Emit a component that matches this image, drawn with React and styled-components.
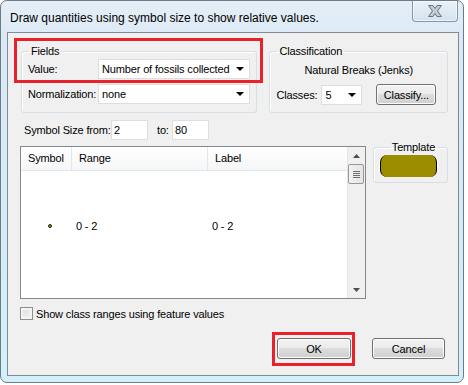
import styled, { createGlobalStyle } from "styled-components";

const Global = createGlobalStyle`
    html, body {
        margin: 0;
        padding: 0;
        background: #ffffff;
        font-family: "Segoe UI", "Liberation Sans", Arial, sans-serif;
        font-size: 11px;
        color: #000;
    }
`;

export default function App(){
    return(
        <>
        <Global />
        <Window>
            <TitleBar>
                <Title>Draw quantities using symbol size to show relative values.</Title>
                <CloseBtn>
                    <svg width="20" height="14" viewBox="0 0 20 14">
                        <path d="M3.5 1.5 L8 1.5 L10 4.5 L12 1.5 L16.5 1.5 L12.5 7 L16.5 12.5 L12 12.5 L10 9.5 L8 12.5 L3.5 12.5 L7.5 7 Z"
                            fill="#c3cbd3" stroke="#6a747e" strokeWidth="1" strokeLinejoin="round" />
                    </svg>
                </CloseBtn>
            </TitleBar>
            <Body>
                <TopRow>
                    <Highlight $left={-7} $top={-6} $w={249} $h={45} />
                    <Group $w={237}>
                        <Legend>Fields</Legend>
                        <FieldRow>
                            <FieldLabel>Value:</FieldLabel>
                            <Combo $w={152}>Number of fossils collected<Arrow /></Combo>
                        </FieldRow>
                        <FieldRow>
                            <FieldLabel>Normalization:</FieldLabel>
                            <Combo $w={152}>none<Arrow /></Combo>
                        </FieldRow>
                    </Group>
                    <Group $w={179}>
                        <Legend>Classification</Legend>
                        <Method>Natural Breaks (Jenks)</Method>
                        <ClassRow>
                            <ClassLabel>Classes:</ClassLabel>
                            <Combo $w={41}>5<Arrow /></Combo>
                            <Button $w={60} $h={21}>Classify...</Button>
                        </ClassRow>
                    </Group>
                </TopRow>

                <SizeRow>
                    <SizeLabel>Symbol Size from:</SizeLabel>
                    <TextBox>2</TextBox>
                    <ToLabel>to:</ToLabel>
                    <TextBox>80</TextBox>
                </SizeRow>

                <MiddleRow>
                    <List>
                        <ListMain>
                            <Header>
                                <HeadCell $w={51}>Symbol</HeadCell>
                                <HeadCell $w={136}>Range</HeadCell>
                                <HeadCell $w={139} $last>Label</HeadCell>
                            </Header>
                            <Row>
                                <Cell $w={51} $center><Dot /></Cell>
                                <Cell $w={136}>0 - 2</Cell>
                                <Cell $w={139}>0 - 2</Cell>
                            </Row>
                        </ListMain>
                        <ScrollBar>
                            <ScrollArrow>
                                <svg width="7" height="4" viewBox="0 0 7 4"><path d="M0 4 L3.5 0 L7 4 Z" fill="#4d4d4d" /></svg>
                            </ScrollArrow>
                            <Thumb>
                                <Grip /><Grip /><Grip /><Grip />
                            </Thumb>
                            <Track />
                            <ScrollArrow>
                                <svg width="7" height="4" viewBox="0 0 7 4"><path d="M0 0 L3.5 4 L7 0 Z" fill="#4d4d4d" /></svg>
                            </ScrollArrow>
                        </ScrollBar>
                    </List>
                    <TemplateGroup>
                        <TemplateLegend>Template</TemplateLegend>
                        <Swatch />
                    </TemplateGroup>
                </MiddleRow>

                <CheckRow>
                    <CheckBox />
                    <span>Show class ranges using feature values</span>
                </CheckRow>

                <ButtonRow>
                    <Highlight $left={-5} $top={-6} $w={83} $h={34} />
                    <Button $w={74} $h={21}>OK</Button>
                    <Button $w={73} $h={21}>Cancel</Button>
                </ButtonRow>
            </Body>
        </Window>
        </>
    )
}

const Window = styled.div`
    width: 464px;
    height: 383px;
    box-sizing: border-box;
    border: 1px solid #6d7b89;
    border-radius: 7px;
    background: linear-gradient(#e6eef6 0%, #dbe9f5 10%, #d3ecf7 60%, #d3f1fb 100%);
    padding: 0 4px 6px 6px;
    display: flex;
    flex-direction: column;
    white-space: nowrap;
`;

const TitleBar = styled.div`
    height: 31px;
    display: flex;
    align-items: flex-start;
    justify-content: space-between;
`;

const Title = styled.div`
    padding: 10px 0 0 3px;
    font-size: 12px;
    color: #000;
`;

const CloseBtn = styled.div`
    width: 46px;
    height: 21px;
    margin-right: 1px;
    box-sizing: border-box;
    border: 1px solid #8796a6;
    border-top: none;
    border-radius: 0 0 4px 4px;
    background: linear-gradient(#e9f1f8, #d5e3ef);
    box-shadow: inset 0 0 0 1px rgba(255,255,255,0.6);
    display: flex;
    align-items: center;
    justify-content: center;
`;

const Body = styled.div`
    flex: 1;
    box-sizing: border-box;
    border: 1px solid #7f8a95;
    background: #f0f0f0;
    padding: 11px 10px 0 13px;
    display: flex;
    flex-direction: column;
    font-size: 11px;
    letter-spacing: -0.15px;
`;

const TopRow = styled.div`
    position: relative;
    display: flex;
    gap: 12px;
`;

const Highlight = styled.div`
    position: absolute;
    left: ${p => p.$left}px;
    top: ${p => p.$top}px;
    width: ${p => p.$w}px;
    height: ${p => p.$h}px;
    box-sizing: border-box;
    border: 3px solid #e8212b;
    pointer-events: none;
`;

const Group = styled.fieldset`
    width: ${p => p.$w}px;
    height: 69px;
    box-sizing: border-box;
    margin: 0;
    padding: 1px 6px 0 6px;
    border: 1px solid #d5dfe5;
    border-radius: 3px;
    box-shadow: inset 1px 1px 0 #fff;
    display: flex;
    flex-direction: column;
    gap: 5px;
`;

const Legend = styled.legend`
    padding: 0 2px;
    margin-left: 1px;
    line-height: 14px;
    font-size: 11px;
`;

const FieldRow = styled.div`
    display: flex;
    align-items: center;
`;

const FieldLabel = styled.span`
    width: 70px;
    flex-shrink: 0;
`;

const Combo = styled.div`
    position: relative;
    width: ${p => p.$w}px;
    height: 20px;
    flex-shrink: 0;
    box-sizing: border-box;
    background: #fff;
    border: 1px solid #dedede;
    padding: 0 0 0 3px;
    line-height: 18px;
    font-size: 11px;
    display: flex;
    align-items: center;
    justify-content: space-between;
`;

const Arrow = styled.span`
    width: 0;
    height: 0;
    margin-right: 5px;
    border-left: 4px solid transparent;
    border-right: 4px solid transparent;
    border-top: 4px solid #000;
`;

const Method = styled.div`
    text-align: center;
    line-height: 16px;
    margin-top: 3px;
`;

const ClassRow = styled.div`
    display: flex;
    align-items: center;
    margin-top: 1px;
    & > button { margin-left: 14px; }
`;

const ClassLabel = styled.span`
    width: 45px;
    flex-shrink: 0;
`;

const Button = styled.button`
    width: ${p => p.$w}px;
    height: ${p => p.$h}px;
    flex-shrink: 0;
    box-sizing: border-box;
    padding: 0;
    border: 1px solid #707070;
    border-radius: 3px;
    background: linear-gradient(#f2f2f2 0%, #ebebeb 49%, #dddddd 50%, #cfcfcf 100%);
    box-shadow: inset 0 0 0 1px #fcfcfc;
    font-family: "Segoe UI", "Liberation Sans", Arial, sans-serif;
    font-size: 11px;
    letter-spacing: -0.15px;
    color: #000;
`;

const SizeRow = styled.div`
    display: flex;
    align-items: center;
    margin-top: 7px;
    padding-left: 3px;
`;

const SizeLabel = styled.span`
    width: 87px;
    flex-shrink: 0;
`;

const TextBox = styled.div`
    width: 37px;
    height: 20px;
    flex-shrink: 0;
    box-sizing: border-box;
    background: #fff;
    border: 1px solid #dedede;
    padding-left: 2px;
    line-height: 18px;
`;

const ToLabel = styled.span`
    margin: 0 0 0 9px;
    width: 15px;
    flex-shrink: 0;
`;

const MiddleRow = styled.div`
    display: flex;
    align-items: flex-start;
    gap: 7px;
    margin: 6px 0 0 -1px;
`;

const List = styled.div`
    width: 346px;
    height: 153px;
    box-sizing: border-box;
    border: 1px solid #828790;
    background: #fff;
    display: flex;
`;

const ListMain = styled.div`
    flex: 1;
    display: flex;
    flex-direction: column;
`;

const Header = styled.div`
    height: 23px;
    display: flex;
    background: linear-gradient(#ffffff, #f5f6f7);
    border-bottom: 1px solid #e3e6ea;
`;

const HeadCell = styled.div`
    width: ${p => p.$w}px;
    box-sizing: border-box;
    padding-left: 7px;
    line-height: 23px;
    border-right: ${p => p.$last ? "none" : "1px solid #e3e6ea"};
`;

const Row = styled.div`
    display: flex;
    align-items: center;
    margin-top: 47px;
    height: 16px;
`;

const Cell = styled.div`
    width: ${p => p.$w}px;
    box-sizing: border-box;
    padding-left: ${p => p.$center ? "0" : "4px"};
    display: flex;
    justify-content: ${p => p.$center ? "center" : "flex-start"};
`;

const Dot = styled.span`
    width: 2px;
    height: 2px;
    border-radius: 50%;
    background: #9c8c00;
    border: 1px solid #222;
    margin-left: 6px;
`;

const ScrollBar = styled.div`
    width: 17px;
    display: flex;
    flex-direction: column;
    background: #f0f0f0;
    border-left: 1px solid #e6e6e6;
`;

const ScrollArrow = styled.div`
    height: 17px;
    display: flex;
    align-items: center;
    justify-content: center;
`;

const Thumb = styled.div`
    height: 20px;
    margin: 0 1px 0 0;
    box-sizing: border-box;
    border: 1px solid #979797;
    border-radius: 2px;
    background: linear-gradient(90deg, #f3f3f3, #e4e4e4);
    display: flex;
    flex-direction: column;
    align-items: center;
    justify-content: center;
    gap: 1px;
`;

const Grip = styled.span`
    width: 7px;
    height: 1px;
    background: #6f6f6f;
`;

const Track = styled.div`
    flex: 1;
`;

const TemplateGroup = styled.fieldset`
    width: 76px;
    height: 43px;
    box-sizing: border-box;
    margin: -6px 0 0 0;
    padding: 1px 0 0 6px;
    border: 1px solid #d5dfe5;
    border-radius: 3px;
    box-shadow: inset 1px 1px 0 #fff;
`;

const TemplateLegend = styled.legend`
    margin: 0 auto;
    padding: 0 2px;
    line-height: 14px;
`;

const Swatch = styled.div`
    width: 57px;
    height: 22px;
    box-sizing: border-box;
    background: #9c8c00;
    border-left: 1px solid #000;
    border-right: 1px solid #000;
    border-radius: 7px;
    box-shadow: -1px 0 0 #fff, 1px 0 0 #fff;
`;

const CheckRow = styled.div`
    display: flex;
    align-items: center;
    gap: 3px;
    margin: 8px 0 0 -1px;
`;

const CheckBox = styled.span`
    width: 13px;
    height: 13px;
    box-sizing: border-box;
    border: 1px solid #8e8f8f;
    background: linear-gradient(135deg, #dcdcdc, #f6f6f6);
    box-shadow: inset 0 0 0 2px #f4f4f4;
`;

const ButtonRow = styled.div`
    position: relative;
    display: flex;
    justify-content: flex-end;
    gap: 21px;
    margin: 18px 3px 0 0;
    align-self: flex-end;
`;
